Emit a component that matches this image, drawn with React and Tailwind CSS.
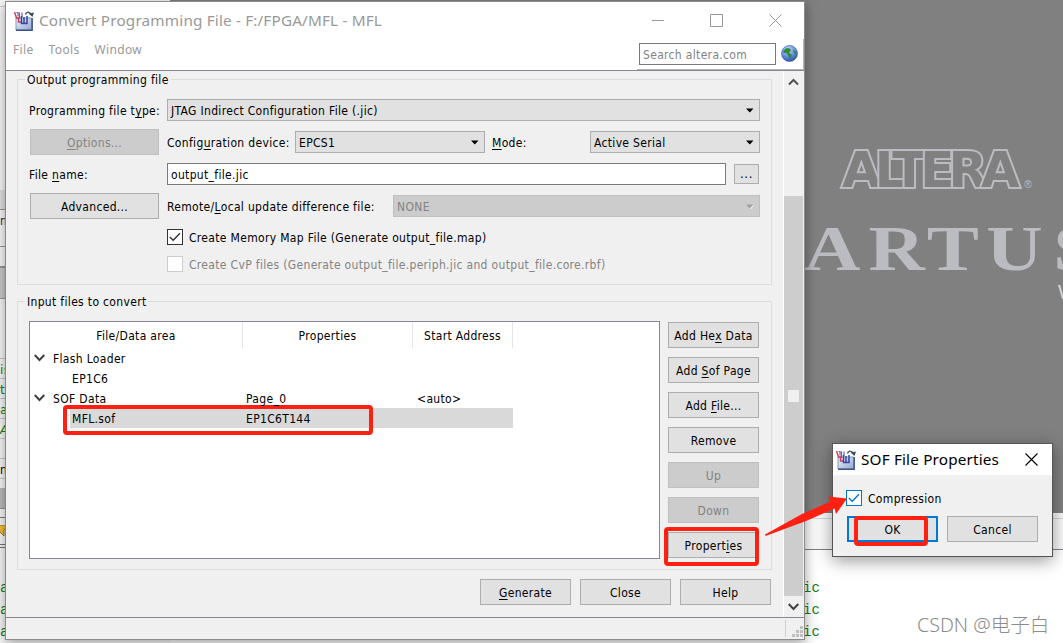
import clsx from 'clsx'

// one underlined letter marks the keyboard shortcut: "Add He&x Data"
function Caption({ text }) {
  const i = text.indexOf('&')
  if (i < 0) return text
  return (
    <>
      {text.slice(0, i)}
      <span className="underline underline-offset-2">{text[i + 1]}</span>
      {text.slice(i + 2)}
    </>
  )
}

function Button({ text, disabled, primary, className }) {
  return (
    <button
      className={clsx(
        'flex h-[26px] shrink-0 items-center justify-center whitespace-nowrap pt-0.5',
        primary ? 'border-2 border-[#0078d7] bg-[#e1e1e1]' : 'border',
        !primary && (disabled ? 'border-[#bfbfbf] bg-[#cccccc] text-[#838383]' : 'border-[#adadad] bg-[#e1e1e1]'),
        className
      )}
    >
      <span><Caption text={text} /></span>
    </button>
  )
}

function Combo({ value, disabled, className }) {
  return (
    <div
      className={clsx(
        'flex h-[22px] items-center justify-between border pl-[3px] pr-[5px]',
        disabled ? 'border-[#bfbfbf] bg-[#cccccc] text-[#838383]' : 'border-[#adadad] bg-[#e1e1e1]',
        className
      )}
    >
      <span className="pt-0.5">{value}</span>
      <svg width="8" height="5" viewBox="0 0 8 5">
        {disabled && <path d="M8 1L5 5L4 4.5L7 1Z" fill="#fff" />}
        <path d="M0 0.5H7.5L3.8 4.5Z" fill={disabled ? '#a0a0a0' : '#000'} />
      </svg>
    </div>
  )
}

function Check({ text, checked, disabled, blue }) {
  return (
    <label className={clsx('flex h-4 items-center gap-1.5', disabled && 'text-[#838383]')}>
      <span
        className={clsx(
          'flex size-4 items-center justify-center border bg-white',
          blue ? 'border-[#0078d7]' : disabled ? 'border-[#cccccc]' : 'border-[#333333]'
        )}
      >
        {checked && (
          <svg width="12" height="10" viewBox="0 0 12 10" fill="none" stroke={blue ? '#0078d7' : '#333'} strokeWidth="1.4">
            <path d="M0.8 5L4.2 8.3L11 1.3" />
          </svg>
        )}
      </span>
      <span className="whitespace-nowrap pt-0.5">{text}</span>
    </label>
  )
}

function AppIcon() {
  return (
    <svg width="20" height="20" viewBox="0 0 20 20">
      <defs>
        <linearGradient id="box" x1="0" y1="0" x2="1" y2="1">
          <stop offset="0" stopColor="#f2f5fd" />
          <stop offset="1" stopColor="#8fa5d2" />
        </linearGradient>
      </defs>
      <path d="M2 7H17.500V19H2Z" fill="url(#box)" stroke="#8494b8" />
      <path d="M2 19.2H18.2V7" fill="none" stroke="#3d5484" strokeWidth="1.4" />
      <path d="M11.5 3.500C12 1 15 0.5 16.5 2.5" fill="none" stroke="#4c5f6c" strokeWidth="1.5" />
      <path d="M14.5 2.500L20 1.500L18.500 6Z" fill="#3c4c58" />
      <path d="M2.5 1.500H4V5.500M5.500 1.500V8M8 1.500V6" fill="none" stroke="#6b5fb0" strokeWidth="1.2" />
      <path d="M0.5 1L2.500 7H4.500V11H7" fill="none" stroke="#d23b55" strokeWidth="1.5" />
      <path d="M7.5 5V12.5H10V6M10 12.500H13V5" fill="none" stroke="#3344a0" strokeWidth="1.5" />
    </svg>
  )
}

function Globe() {
  return (
    <svg width="17" height="17" viewBox="0 0 17 17">
      <defs>
        <radialGradient id="sea" cx="0.4" cy="0.25" r="0.8">
          <stop offset="0" stopColor="#c5dbf8" />
          <stop offset="0.6" stopColor="#5e88da" />
          <stop offset="1" stopColor="#2848a0" />
        </radialGradient>
      </defs>
      <circle cx="8.5" cy="8.5" r="8" fill="url(#sea)" stroke="#4361ad" strokeWidth="0.7" />
      <path d="M2 6L5.500 3L9 3.5L10 5.5L8 7.5L9.5 9L11 10L9.5 13L8.5 15L7.5 11L5.500 8L3 8Z" fill="#2d8c3c" />
      <path d="M12 4.500L15 7L15.5 9.5L13 8Z M12.5 12L14.5 11L12.5 14Z" fill="#2d8c3c" />
    </svg>
  )
}

function Group({ title, className, children }) {
  return (
    <fieldset className={clsx('relative ml-[11px] w-[755px] border border-[#dcdcdc]', className)}>
      <div className="absolute -top-2 left-[7px] h-4 whitespace-nowrap bg-[#f0f0f0] px-0.5 leading-4">{title}</div>
      {children}
    </fieldset>
  )
}

function Expander() {
  return (
    <svg width="11" height="8" viewBox="0 0 11 8" fill="none" stroke="#404040" strokeWidth="2">
      <path d="M0.7 1L5.5 6L10.3 1" />
    </svg>
  )
}

const rows = [
  { name: 'Flash Loader', open: true },
  { name: 'EP1C6' },
  { name: 'SOF Data', props: 'Page_0', start: '<auto>', open: true },
  { name: 'MFL.sof', props: 'EP1C6T144', selected: true },
]

const sideButtons = [
  { text: 'Add He&x Data' },
  { text: 'Add &Sof Page' },
  { text: 'Add &File...' },
  { text: 'Remove' },
  { text: 'Up', disabled: true },
  { text: 'Down', disabled: true },
  { text: 'Propert&ies' },
]

function FileTree() {
  return (
    <div className="h-[238px] w-[631px] border border-[#828790] bg-white">
      <div className="flex h-[26px] text-center leading-[28px]">
        <div className="w-[213px] border-r border-[#e5e5e5]">File/Data area</div>
        <div className="w-[170px] border-r border-[#e5e5e5]">Properties</div>
        <div className="w-[100px] border-r border-[#e5e5e5]">Start Address</div>
      </div>
      {rows.map(row => (
        <div key={row.name} className="flex h-5 w-[483px] leading-[22px]">
          {row.open && <div className="flex w-[21px] items-center pl-1"><Expander /></div>}
          {!row.open && <div className="w-10" />}
          <div className={clsx('flex flex-1 pl-0.5', row.selected && 'bg-[#d9d9d9]')}>
            <div className={row.open ? 'w-[193px]' : 'w-[174px]'}>{row.name}</div>
            <div className="relative z-10 w-[171px]">{row.props}</div>
            <div>{row.start}</div>
          </div>
        </div>
      ))}
    </div>
  )
}

function ScrollBar() {
  return (
    <div className="flex w-[21px] flex-col border-l border-white">
      <div className="flex h-[125px] justify-center pr-px pt-[7px]">
        <svg width="11" height="8" viewBox="0 0 11 8" fill="none" stroke="#505050" strokeWidth="2">
          <path d="M1 6.5L5.5 2L10 6.5" />
        </svg>
      </div>
      <div className="mr-px flex h-[400px] items-center justify-center bg-[#cdcdcd]">
        <div className="h-3 w-[11px] bg-[#f0f0f0]" />
      </div>
      <div className="flex flex-1 items-center justify-center pr-px">
        <Expander />
      </div>
    </div>
  )
}

function ConvertWindow() {
  return (
    <div className="absolute left-[5px] top-px flex h-[639px] w-[800px] flex-col border border-[#8c8c8c] bg-[#f0f0f0] shadow-[0_3px_12px_rgba(0,0,0,0.4)]">
      <div className="flex h-[68px] flex-col bg-white text-[#999999]">
        <div className="flex h-[37px] items-center pl-2">
          <AppIcon />
          <h1 className="ml-[5px] w-[560px] whitespace-nowrap font-['Noto_Sans'] text-[15.3px] tracking-[0.16px]">
            Convert Programming File - F:/FPGA/MFL - MFL
          </h1>
          <svg width="130" height="13" viewBox="0 0 130 13" fill="none" stroke="#999" className="ml-[53px]">
            <path d="M0 6.5H12M117.500 0.5L129.500 12.500M129.500 0.500L117.500 12.500" />
            <path d="M58.500 0.500H70.500V12.500H58.500Z" />
          </svg>
        </div>
        <div className="flex h-[31px]">
          <div className="flex flex-1 gap-[15px] pl-[7px] pt-[2px] font-['Noto_Sans'] text-[12px] tracking-[0.35px]">
            <span>File</span>
            <span>Tools</span>
            <span>Window</span>
          </div>
          <div className="flex w-[167px] items-center gap-[5px] border-b border-r border-[#b5b5b5] pl-0.5 pb-px">
            <div className="h-[22px] w-[137px] border border-[#7a7a7a] pl-[3px] leading-[22px] text-[#838383]">Search altera.com</div>
            <Globe />
          </div>
        </div>
      </div>

      <div className="-ml-px flex h-[548px] border-y border-l border-[#828790]">
        <div className="w-[777px] pt-2">
          <Group title="Output programming file" className="h-[206px] pl-[11px] pt-[19px]">
            <div className="flex h-[22px] items-center">
              <span className="w-[138px] whitespace-nowrap pt-0.5"><Caption text="Programming file t&ype:" /></span>
              <Combo value="JTAG Indirect Configuration File (.jic)" className="w-[593px]" />
            </div>
            <div className="mt-[8px] flex h-[26px] items-center">
              <Button text="&Options..." disabled className="ml-px w-[129px]" />
              <span className="ml-[8px] w-[128px] whitespace-nowrap pt-0.5"><Caption text="Config&uration device:" /></span>
              <Combo value="EPCS1" className="w-[190px]" />
              <span className="ml-[7px] w-[98px] pt-0.5"><Caption text="&Mode:" /></span>
              <Combo value="Active Serial" className="w-[170px]" />
            </div>
            <div className="mt-[8px] flex h-[22px] items-center">
              <span className="w-[138px] pt-0.5"><Caption text="File &name:" /></span>
              <div className="h-[22px] w-[559px] border border-[#7a7a7a] bg-white pl-[3px] leading-[22px]">output_file.jic</div>
              <button className="ml-[8px] h-5 w-[25px] border border-[#adadad] bg-[#e1e1e1] text-[13px] leading-[18px] tracking-[0.6px]">...</button>
            </div>
            <div className="mt-[8px] flex h-[26px] items-center">
              <Button text="Advanced..." className="ml-px w-[129px]" />
              <span className="ml-[8px] w-[226px] whitespace-nowrap pt-0.5"><Caption text="Remote/&Local update difference file:" /></span>
              <Combo value="NONE" disabled className="w-[367px]" />
            </div>
            <div className="ml-[138px] mt-[10px] flex flex-col gap-[11px]">
              <Check text="Create Memory Map File (Generate output_file.map)" checked />
              <Check text="Create CvP files (Generate output_file.periph.jic and output_file.core.rbf)" disabled />
            </div>
          </Group>

          <Group title="Input files to convert" className="mt-[16px] flex h-[269px] gap-2 pl-[11px] pt-[19px]">
            <FileTree />
            <div className="flex flex-col gap-[9px] pt-px">
              {sideButtons.map(b => <Button key={b.text} {...b} className="w-[91px]" />)}
            </div>
          </Group>

          <div className="mt-[9px] flex justify-end gap-[9px] pr-3">
            <Button text="&Generate" className="w-[91px]" />
            <Button text="Close" className="w-[91px]" />
            <Button text="Help" className="w-[91px]" />
          </div>
        </div>
        <ScrollBar />
      </div>

      <div className="flex flex-1 justify-end pt-0.5">
        <div className="mr-[6px] h-[17px] w-px bg-[#d0d0d0]" />
        <svg width="12" height="18" viewBox="0 0 12 18" fill="#bfbfbf">
          <path d="M8 6h3v3h-3zM4 10h3v3h-3zM8 10h3v3h-3zM0 14h3v3h-3zM4 14h3v3h-3zM8 14h3v3h-3z" />
        </svg>
      </div>
    </div>
  )
}

function PropertiesDialog() {
  return (
    <div className="absolute left-[832px] top-[443px] h-[114px] w-[221px] border border-[#555555] bg-[#f0f0f0] shadow-[0_4px_16px_rgba(0,0,0,0.4)]">
      <div className="flex h-[31px] items-center bg-white pl-[3px]">
        <AppIcon />
        <h2 className="ml-[5px] w-[164px] whitespace-nowrap font-['Noto_Sans'] text-[15.3px] tracking-[0.16px]">SOF File Properties</h2>
        <svg width="13" height="13" viewBox="0 0 13 13" stroke="#000" strokeWidth="1.1">
          <path d="M0.5 0.5L12.500 12.500M12.500 0.500L0.500 12.500" />
        </svg>
      </div>
      <div className="flex flex-col gap-[10px] pl-[13px] pt-[15px]">
        <Check text="Compression" checked blue />
        <div className="flex gap-[9px] pl-px">
          <Button text="OK" primary className="w-[91px]" />
          <Button text="Cancel" className="w-[91px]" />
        </div>
      </div>
    </div>
  )
}

function Backdrop() {
  return (
    <div className="flex h-[643px]">
      <div className="flex w-[170px] flex-col bg-[#fafafa]">
        <div className="h-[7px] border-b border-[#cccccc]" />
        <div className="h-[184px]" />
        <div className="h-[20px] bg-[#e3e3e3]" />
        <div className="h-[38px] border-y border-[#999999] text-[#16315c] leading-[22px]">n</div>
        <div className="h-[20px] border-b border-[#999999]" />
        <div className="h-[32px] border-y border-[#999999] bg-[#cccccc]" />
        <div className="h-[61px] border-b border-[#cccccc]" />
        <div className="font-['DejaVu_Sans'] leading-[23px] text-[#168016]">
          <div className="h-5 border-b border-[#cccccc]">is</div>
          <div className="h-5 border-b border-[#cccccc]">to</div>
          <div className="h-5 border-b border-[#cccccc]">at</div>
          <div className="h-5 border-b border-[#cccccc] italic">A</div>
        </div>
        <div className="h-5 border-b border-[#cccccc]" />
        <div className="h-5 border-b border-[#cccccc] leading-[23px]">n</div>
        <div className="mt-[9px] h-[21px] border-b border-[#999999] bg-[#bdbdbd]" />
        <div className="mt-[8px] h-[28px] border-y border-[#777777] pt-[7px]">
          <svg width="10" height="12" viewBox="0 0 10 12"><path d="M-4 0H8L4 5V11L0 7Z" fill="#f3c33b" stroke="#a87418" /></svg>
        </div>
        <div className="mt-[2px] border-t border-[#777777] pt-[29px] font-['Liberation_Mono'] text-[14px] leading-[22px] text-[#168016]">
          <div>a</div>
          <div>a</div>
          <div>ag</div>
        </div>
      </div>
      <div className="flex flex-1 flex-col bg-white">
        <div className="h-[513px] bg-[#808080]">
          <svg width="893" height="513" viewBox="170 0 893 513">
            <g fill="#808080" stroke="#bbbcc2" strokeWidth="4" style={{ paintOrder: 'stroke' }} className="font-['DejaVu_Sans'] text-[50px] font-bold">
              <text x="842" y="187" textLength="178" lengthAdjust="spacing">ALTERA</text>
            </g>
            <text x="1024" y="188" fill="#bbbcc2" className="font-['Liberation_Sans'] text-[11px] tracking-normal">®</text>
            <g transform="translate(804 269.500) scale(1.24 1)" fill="#bbbcc2" className="font-['Liberation_Serif'] text-[63px] font-bold">
              <text x="0 52 99 147 201">ARTUS</text>
            </g>
            <text x="1058" y="299" fill="#d8d8d8" className="font-['Liberation_Sans'] text-[20px]">Web Edition</text>
          </svg>
        </div>
        <div className="h-[39px] border-b border-[#7e8088] bg-[#fafafa] pt-[5px]">
          <div className="h-px bg-[#d5d5d5]" />
        </div>
        <div className="pl-[633px] pt-[27px] font-['Liberation_Mono'] text-[14px] leading-[22px] tracking-normal text-[#168016]">
          <div>ic</div>
          <div>ic</div>
          <div>ic</div>
        </div>
      </div>
    </div>
  )
}

export default function App() {
  return (
    <div className="relative h-[643px] w-[1063px] overflow-hidden bg-white font-['DejaVu_Sans_Condensed'] text-[12px] tracking-[0.33px] text-black">
      <Backdrop />
      <ConvertWindow />
      <PropertiesDialog />

      {/* red annotations */}
      <div className="absolute left-[63px] top-[405px] h-[30px] w-[310px] rounded border-4 border-[#ff2012]" />
      <div className="absolute left-[664px] top-[527px] h-[39px] w-[95px] rounded border-4 border-[#ff2012]" />
      <div className="absolute left-[854px] top-[516px] h-[30px] w-[74px] rounded border-4 border-[#ff2012]" />
      <svg className="absolute left-[760px] top-[490px]" width="90" height="50" viewBox="760 490 90 50">
        <path d="M765 534.500L802 514L830.500 501.500L828 496.500L847 498.500L836 514L834.500 508.500L806 521L765.500 536Z" fill="#ff2012" />
      </svg>

      <div className="absolute left-[917px] top-[611px] whitespace-nowrap font-['Noto_Sans','Noto_Sans_CJK_SC',sans-serif] text-[19.6px] font-light leading-[28px] tracking-normal text-[#8c8c8c]">
        CSDN @电子白
      </div>
    </div>
  )
}
